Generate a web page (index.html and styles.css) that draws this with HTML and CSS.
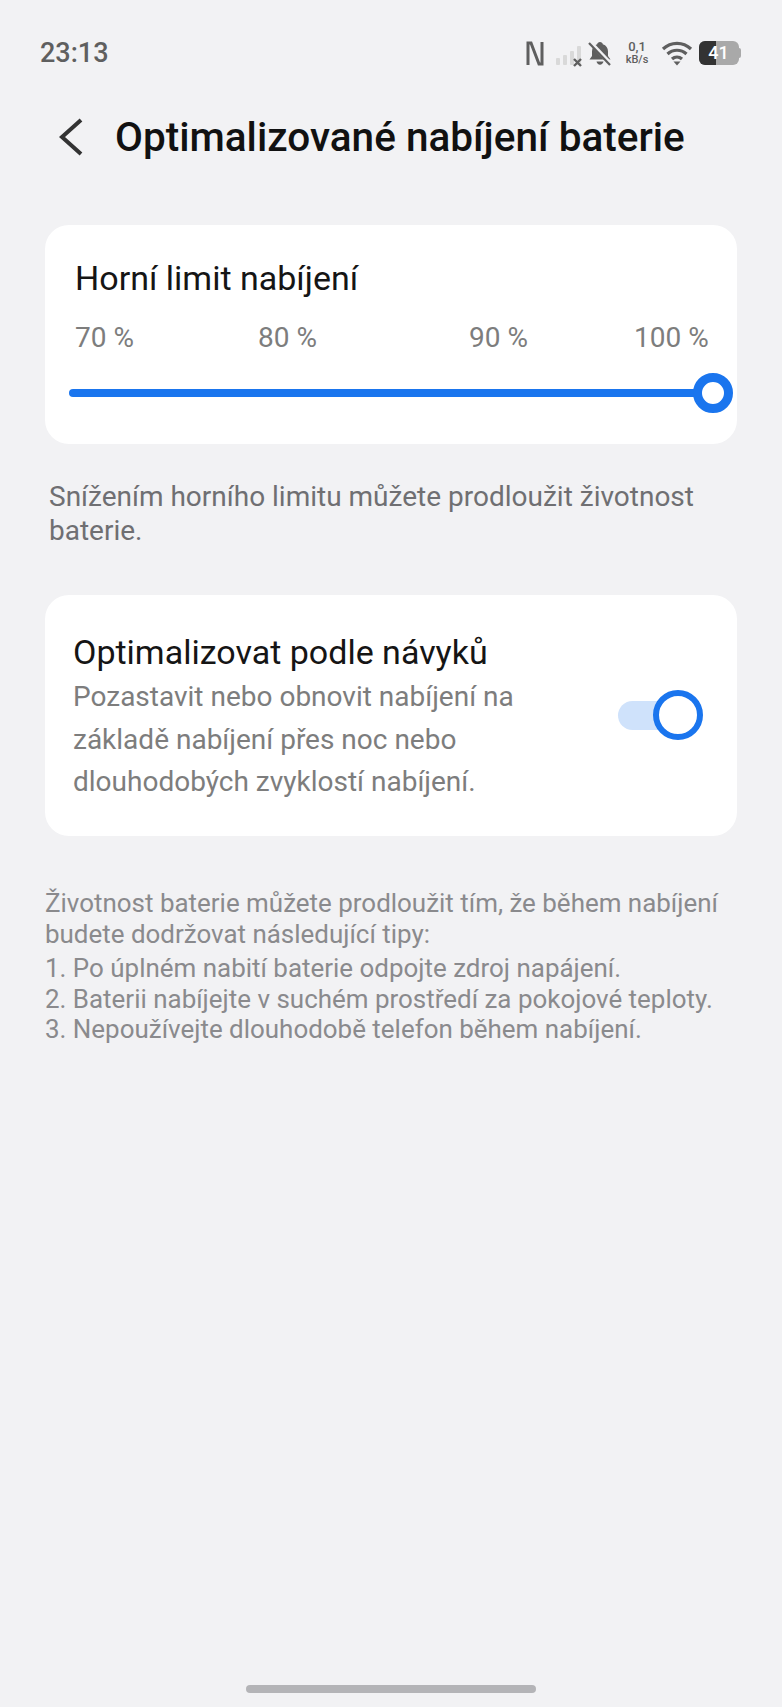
FILE: index.html
```html
<!DOCTYPE html>
<html lang="cs">

    <head>
        <meta charset="utf-8">
        <meta name="viewport" content="width=device-width, initial-scale=1">
        <title>Optimalizované nabíjení baterie</title>
        <link rel="stylesheet" href="styles.css">
    </head>

    <body>

        <main>

            <div class="status">
                <span class="status_time">23:13</span>
                <div class="status_icons">
                    <svg class="ic_nfc" width="18" height="25" viewBox="0 0 18 25"><path d="M2 24V2h3l8 21h3V1" fill="none" stroke="#5f5f5f" stroke-width="3"/></svg>
                    <svg class="ic_signal" width="28" height="22" viewBox="0 0 28 22">
                        <rect x="0" y="13" width="4" height="7" rx="1" fill="#d9d9d9"/>
                        <rect x="7" y="10" width="4" height="10" rx="1" fill="#d9d9d9"/>
                        <rect x="14" y="6" width="4" height="14" rx="1" fill="#d9d9d9"/>
                        <rect x="21" y="1" width="4" height="19" rx="1" fill="#d9d9d9"/>
                        <path d="M18 14l7 7M25 14l-7 7" stroke="#5f5f5f" stroke-width="2.400"/>
                    </svg>
                    <svg class="ic_bell" width="24" height="25" viewBox="0 0 24 25">
                        <path d="M12 1c1.600 0 2.600 1 2.800 2.200C18.200 4.300 20 7 20 10.500V15l2.500 3.500H1.500L4 15v-4.500C4 7 5.800 4.300 9.200 3.200 9.400 2 10.400 1 12 1zM8.500 20.500h7c-.4 2-1.800 3.200-3.500 3.200s-3.100-1.200-3.500-3.200z" fill="#5f5f5f"/>
                        <path d="M2 1l21 22" stroke="#f2f2f4" stroke-width="4"/>
                        <path d="M1 2l21 22" stroke="#5f5f5f" stroke-width="2.200"/>
                    </svg>
                    <div class="speed"><span>0,1</span><span class="speed_unit">kB/s</span></div>
                    <svg class="ic_wifi" width="32" height="26" viewBox="0 0 32 26">
                        <path d="M2 9c8-7.500 20-7.500 28 0M6.500 14c5.500-5 13.500-5 19 0M11 19c3-2.700 7-2.700 10 0" fill="none" stroke="#5f5f5f" stroke-width="3.200"/>
                        <path d="M12.500 21.500h7L16 25.500z" fill="#5f5f5f"/>
                    </svg>
                    <div class="battery">
                        <div class="battery_fill"></div>
                        <span class="battery_text">41</span>
                        <div class="battery_tip"></div>
                    </div>
                </div>
            </div>

            <div class="header">
                <svg class="back" width="26" height="40" viewBox="0 0 26 40"><path d="M23 3L4 20l19 17" fill="none" stroke="#333" stroke-width="4"/></svg>
                <h1>Optimalizované nabíjení baterie</h1>
            </div>

            <section class="card card_limit">
                <h2>Horní limit nabíjení</h2>
                <div class="marks">
                    <span>70 %</span>
                    <span>80 %</span>
                    <span>90 %</span>
                    <span>100 %</span>
                </div>
                <div class="slider">
                    <div class="slider_thumb"></div>
                </div>
            </section>

            <p class="note">Snížením horního limitu můžete prodloužit životnost baterie.</p>

            <section class="card card_habit">
                <div class="habit_text">
                    <h2>Optimalizovat podle návyků</h2>
                    <p>Pozastavit nebo obnovit nabíjení na základě nabíjení přes noc nebo dlouhodobých zvyklostí nabíjení.</p>
                </div>
                <div class="toggle">
                    <div class="toggle_thumb"></div>
                </div>
            </section>

            <div class="tips">
                <p>Životnost baterie můžete prodloužit tím, že během nabíjení budete dodržovat následující tipy:</p>
                <ol>
                    <li>1. Po úplném nabití baterie odpojte zdroj napájení.</li>
                    <li>2. Baterii nabíjejte v suchém prostředí za pokojové teploty.</li>
                    <li>3. Nepoužívejte dlouhodobě telefon během nabíjení.</li>
                </ol>
            </div>

            <div class="home_bar"></div>

        </main>

    </body>

</html>
```

FILE: styles.css
```css
* {
    box-sizing: border-box;
}

body {
    margin: 0;
    background: #f2f2f4;
    font-family: Roboto, "Liberation Sans", sans-serif;
}

main {
    display: flex;
    flex-direction: column;
    height: 1707px;
    padding: 0 45px;
}

h1, h2, p, ol {
    margin: 0;
    padding: 0;
    font-weight: 400;
}

.status {
    display: flex;
    align-items: center;
    justify-content: space-between;
    height: 66px;
    margin: 20px -2px 0 -5px;
}

.status_time {
    color: #5f5f5f;
    font-size: 27px;
    font-weight: 500;
}

.status_icons {
    display: flex;
    align-items: center;
}

.ic_signal {
    margin-left: 12px;
    margin-top: 6px;
}

.ic_bell {
    margin-left: 4px;
}

.speed {
    display: flex;
    flex-direction: column;
    align-items: center;
    width: 26px;
    margin-left: 12px;
    color: #5f5f5f;
    font-size: 13px;
    font-weight: 500;
    line-height: 13px;
}

.speed_unit {
    font-size: 11px;
}

.ic_wifi {
    margin-left: 11px;
}

.battery {
    position: relative;
    width: 40px;
    height: 24px;
    margin-left: 6px;
    border-radius: 6px;
    background: #a9a9a9;
}

.battery_fill {
    width: 17px;
    height: 100%;
    border-radius: 6px 0 0 6px;
    background: #333;
}

.battery_text {
    position: absolute;
    top: 0;
    left: 0;
    width: 39px;
    color: #fff;
    font-size: 18px;
    font-weight: 500;
    line-height: 24px;
    text-align: center;
}

.battery_tip {
    position: absolute;
    top: 7px;
    right: -2px;
    width: 2px;
    height: 10px;
    border-radius: 0 2px 2px 0;
    background: #a9a9a9;
}

.header {
    display: flex;
    align-items: center;
    height: 70px;
    margin-left: 13px;
    margin-top: 16px;
}

h1 {
    margin-left: 31px;
    color: #111;
    font-size: 40.500px;
    font-weight: 500;
    white-space: nowrap;
}

.card {
    border-radius: 24px;
    background: #fff;
}

.card_limit {
    height: 219px;
    margin-top: 53px;
    padding: 33px 24px 0 24px;
}

h2 {
    color: #151515;
    font-size: 34px;
    line-height: 40px;
}

.card_limit h2 {
    margin-left: 6px;
}

.marks {
    display: grid;
    grid-template-columns: 183px 211px 165px auto;
    margin: 22px 0 0 6px;
    color: #7d7d7d;
    font-size: 28px;
    line-height: 36px;
}

.slider {
    position: relative;
    height: 8px;
    margin-top: 33px;
    border-radius: 4px;
    background: #1a75ee;
}

.slider_thumb {
    position: absolute;
    top: -16px;
    right: -20px;
    width: 40px;
    height: 40px;
    border: 9px solid #1a75ee;
    border-radius: 50%;
    background: #fff;
}

.note {
    margin: 36px 0 0 4px;
    color: #6f6f72;
    font-size: 28px;
    line-height: 34px;
}

.card_habit {
    display: flex;
    justify-content: space-between;
    height: 241px;
    margin-top: 47px;
    padding: 37px 47px 0 28px;
}

.habit_text {
    width: 480px;
}

.habit_text p {
    margin-top: 4px;
    color: #7d7d7d;
    font-size: 28px;
    line-height: 42.500px;
}

.toggle {
    position: relative;
    width: 72px;
    height: 29px;
    margin-top: 69px;
    border-radius: 15px;
    background: #cfe2fb;
}

.toggle_thumb {
    position: absolute;
    top: -11px;
    right: -13px;
    width: 50px;
    height: 50px;
    border: 6px solid #1a75ee;
    border-radius: 50%;
    background: #fff;
}

.tips {
    margin-top: 52px;
    color: #8a8a8d;
    font-size: 25.950px;
    line-height: 30.500px;
}

.tips ol {
    margin-top: 4px;
    list-style: none;
    white-space: nowrap;
}

.home_bar {
    width: 290px;
    height: 8px;
    margin: auto auto 14px auto;
    border-radius: 4px;
    background: #b4b4b7;
}
```
